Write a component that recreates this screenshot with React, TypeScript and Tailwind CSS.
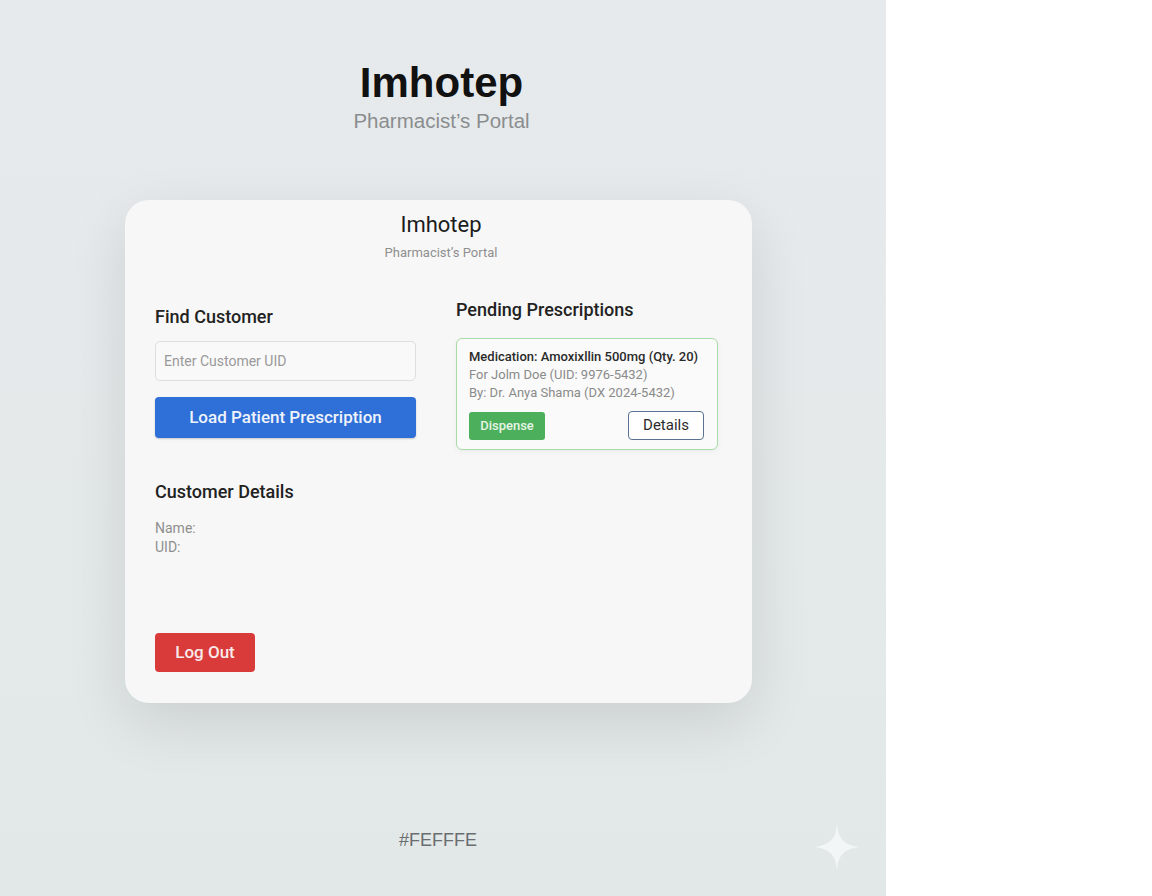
import { useState } from "react";

function Sparkle() {
  return (
    <svg width="44" height="46" viewBox="0 0 44 46" className="absolute left-[815px] top-[824px]">
      <path
        d="M22 0 C23.5 14 28 21 44 23 C28 25 23.5 32 22 46 C20.5 32 16 25 0 23 C16 21 20.5 14 22 0 Z"
        fill="#f3f6f6"
      />
    </svg>
  );
}

export default function App() {
  const [uid, setUid] = useState("");

  return (
    <div className="flex h-[896px] w-[1152px] bg-white">
      <div className="relative flex h-[896px] w-[886px] flex-col bg-gradient-to-b from-[#e7eaec] to-[#e2e8e8] font-['Roboto',sans-serif]">
        <header className="flex flex-col items-center pr-[3px] pt-[57px]">
          <h1 className="font-['Liberation_Sans',Arial,sans-serif] text-[42px] font-bold leading-[52px] text-[#111]">
            Imhotep
          </h1>
          <p className="font-['Liberation_Sans',Arial,sans-serif] text-[20.5px] leading-[24px] text-[#8a8d8f]">
            Pharmacist’s Portal
          </p>
        </header>

        <main className="ml-[125px] mt-[67px] flex h-[503px] w-[627px] flex-col rounded-[24px] bg-[#f7f7f7] px-[30px] pt-[11px] shadow-[0_20px_60px_rgba(0,0,0,0.11)]">
          <div className="flex flex-col items-center pl-[5px]">
            <h2 className="text-[22px] leading-[28px] text-[#1c1c1c]">Imhotep</h2>
            <p className="mt-[5px] text-[13px] leading-[18px] text-[#8f8f8f]">Pharmacist’s Portal</p>
          </div>

          <div className="flex gap-[40px]">
            <section className="flex w-[261px] flex-col pt-[43px]">
              <h3 className="text-[18px] font-medium leading-[24px] text-[#222]">Find Customer</h3>
              <input
                value={uid}
                onChange={(e) => setUid(e.target.value)}
                placeholder="Enter Customer UID"
                className="mt-[12px] h-[40px] w-full rounded-[5px] border border-[#dedede] bg-[#f9f9f9] px-[8px] text-[14px] text-[#333] placeholder:text-[#9a9a9a] focus:outline-none"
              />
              <button className="mt-[16px] h-[41px] w-full rounded-[4px] bg-[#2f6fd8] text-[17px] font-medium text-[#eef3fb] shadow-[0_1px_2px_rgba(0,0,0,0.2)]">
                Load Patient Prescription
              </button>

              <h3 className="mt-[42px] text-[18px] font-medium leading-[24px] text-[#222]">Customer Details</h3>
              <div className="mt-[15px] flex flex-col text-[14px] leading-[19px] text-[#8f8f8f]">
                <span>Name:</span>
                <span>UID:</span>
              </div>
              <button className="mt-[76px] h-[39px] w-[100px] rounded-[4px] bg-[#d93b3b] text-[17px] font-medium text-[#f8eaea]">
                Log Out
              </button>
            </section>

            <section className="flex w-[262px] flex-col pt-[36px]">
              <h3 className="text-[18px] font-medium leading-[24px] text-[#222]">Pending Prescriptions</h3>
              <div className="mt-[16px] flex h-[112px] flex-col rounded-[6px] border-[1.5px] border-[#a9dba6] bg-[#fafafa] px-[12px] pt-[8px] shadow-[0_2px_6px_rgba(0,0,0,0.05)]">
                <p className="text-[13px] font-medium leading-[19px] text-[#2a2a2a]">
                  Medication: Amoxixllin 500mg (Qty. 20)
                </p>
                <p className="text-[13px] leading-[18px] text-[#8a8a8a]">For Jolm Doe (UID: 9976-5432)</p>
                <p className="text-[13px] leading-[18px] text-[#8a8a8a]">By: Dr. Anya Shama (DX 2024-5432)</p>
                <div className="mt-[9px] flex items-start justify-between pr-[1px]">
                  <button className="mt-[1px] h-[28px] w-[76px] rounded-[3px] bg-[#4caf5b] text-[13px] font-medium text-[#e6f4e6]">
                    Dispense
                  </button>
                  <button className="h-[29px] w-[76px] rounded-[4px] border-[1.5px] border-[#5b7290] bg-white text-[15px] text-[#2b2b2b]">
                    Details
                  </button>
                </div>
              </div>
            </section>
          </div>
        </main>

        <p className="mt-[125px] pr-[10px] text-center font-['Liberation_Sans',Arial,sans-serif] text-[18px] leading-[24px] text-[#6a6d6f]">
          #FEFFFE
        </p>

        <Sparkle />
      </div>
      <div className="flex-1 bg-white" />
    </div>
  );
}
